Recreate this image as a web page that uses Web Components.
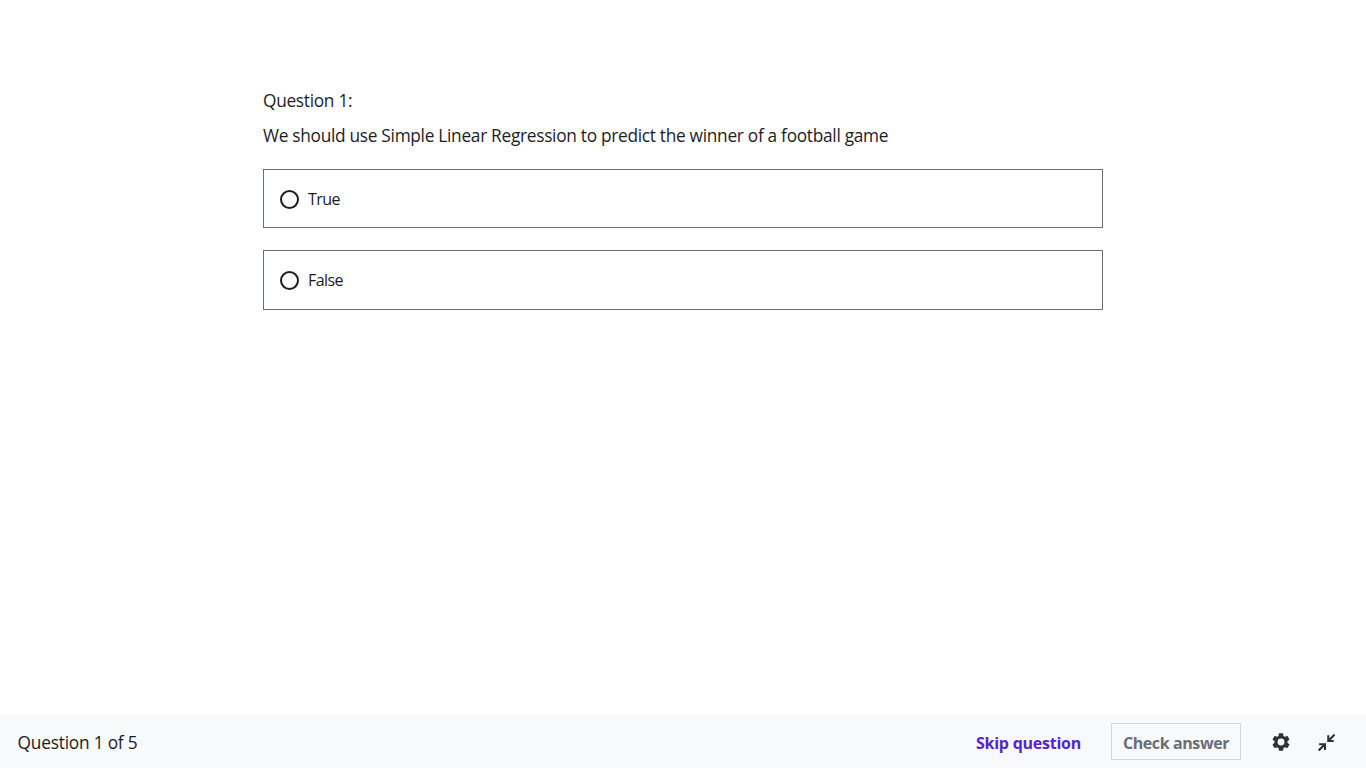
<!DOCTYPE html>
<html lang="en"><head><meta charset="utf-8"><title>Quiz</title>
<style>body{margin:0;background:#fff;color:#1c1d1f;font-family:"Open Sans","Noto Sans",sans-serif}</style></head>
<body><quiz-page></quiz-page>
<script>
const define=(name,html)=>customElements.define(name,class extends HTMLElement{
  constructor(){super();this.attachShadow({mode:'open'}).innerHTML=html;}
});
define('quiz-option',`<style>
:host{display:flex;align-items:center;box-sizing:border-box;width:840px;height:var(--h,59px);border:1px solid #6a6f73;padding-left:16px;gap:9px;font-size:16px;line-height:24px}
svg{display:block;width:19px;height:19px;flex:none;margin-top:var(--drop,2px)}
span{letter-spacing:-.55px}
</style><svg viewBox="0 0 19 19"><circle cx="9.5" cy="9.5" r="8.5" fill="none" stroke="#1c1d1f" stroke-width="2"/></svg><span><slot></slot></span>`);
define('quiz-footer',`<style>
:host{display:flex;align-items:center;box-sizing:border-box;height:53px;background:#f7f9fa;padding:0 30px 0 17.5px;font-size:17.3px;line-height:24px;white-space:nowrap}
.count{flex:1;padding-top:2px;letter-spacing:-.2px}
button{font:inherit;font-weight:700;font-size:16px;border:0;background:none;padding:0;margin:0;line-height:24px;white-space:nowrap}
.skip{color:#5624d0;width:106px;margin-right:29px;text-align:left;letter-spacing:-.25px;padding-top:2px}
.check{box-sizing:border-box;width:130px;height:37px;border:1px solid #d1d7dc;color:#6a6f73;margin-right:31px;letter-spacing:-.4px;padding-top:2px}
svg{display:block;width:18px;height:18px;margin-top:3px}
.gear{margin-right:28px;margin-top:1px}
</style><span class="count">Question 1 of 5</span><button class="skip">Skip question</button><button class="check">Check answer</button>
<svg class="gear" viewBox="1.6 1.6 20.8 20.8"><path fill="#303134" d="M19.43 12.98c.04-.32.07-.64.07-.98s-.03-.66-.07-.98l2.11-1.65c.19-.15.24-.42.12-.64l-2-3.46c-.12-.22-.39-.3-.61-.22l-2.49 1c-.52-.4-1.08-.73-1.69-.98l-.38-2.65A.488.488 0 0 0 14 2h-4c-.25 0-.46.18-.49.42l-.38 2.65c-.61.25-1.17.59-1.69.98l-2.49-1c-.23-.09-.49 0-.61.22l-2 3.46c-.13.22-.07.49.12.64l2.11 1.65c-.04.32-.07.65-.07.98s.03.66.07.98l-2.11 1.65c-.19.15-.24.42-.12.64l2 3.46c.12.22.39.3.61.22l2.49-1c.52.4 1.08.73 1.69.98l.38 2.65c.03.24.24.42.49.42h4c.25 0 .46-.18.49-.42l.38-2.65c.61-.25 1.17-.59 1.69-.98l2.49 1c.23.09.49 0 .61-.22l2-3.46c.12-.22.07-.49-.12-.64l-2.11-1.65zM12 16a4 4 0 1 1 0-8 4 4 0 0 1 0 8z"/></svg>
<svg viewBox="0 0 18 18"><path fill="none" stroke="#303134" stroke-width="2.1" d="M16.600.6 10.800 6.500M10.300 1.300V7H15.700M.7 16.400 6.500 10.800M1.100 10.300H7V15.900"/></svg>`);
define('quiz-page',`<style>
:host{display:flex;flex-direction:column;height:768px}
main{flex:1;width:840px;margin:0 auto;padding-top:89px}
p{margin:0;font-size:17.3px;line-height:24px;white-space:nowrap;letter-spacing:-.29px}
.label{margin-bottom:11px}.question{margin-bottom:21px}
.second{margin-top:22px;--h:60px;--drop:1px}
</style><main><p class="label">Question 1:</p><p class="question">We should use Simple Linear Regression to predict the winner of a football game</p>
<quiz-option>True</quiz-option><quiz-option class="second">False</quiz-option></main><quiz-footer></quiz-footer>`);
</script></body></html>
